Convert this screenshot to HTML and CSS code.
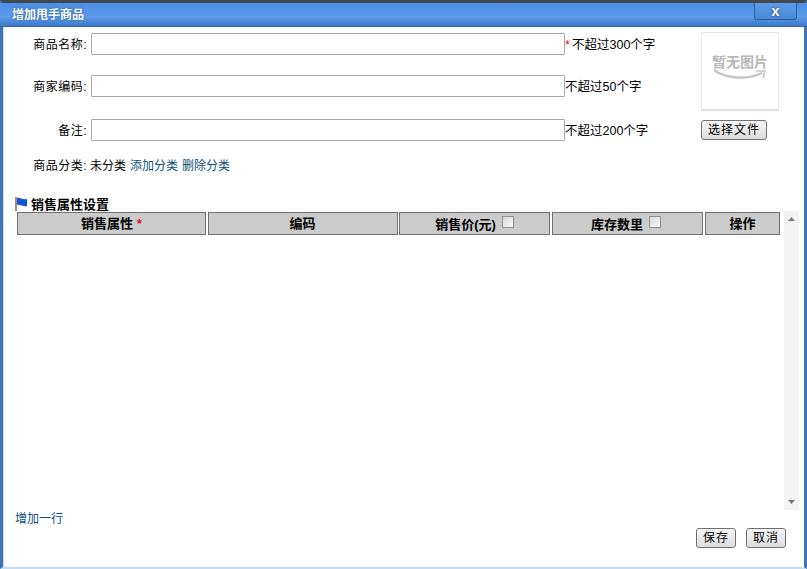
FILE: index.html
```html
<!DOCTYPE html>
<html lang="zh">
<head>
<meta charset="utf-8">
<title>增加甩手商品</title>
<link rel="stylesheet" href="styles.css">
</head>
<body>
<div class="dialog">
  <div class="titlebar">
    <span class="title">增加甩手商品</span>
    <button class="close" type="button">x</button>
  </div>
  <div class="content">
    <div class="top">
      <div class="form">
        <div class="row row1">
          <label class="label">商品名称:</label>
          <input class="input" type="text">
          <span class="hint"><span class="red star">*</span>不超过300个字</span>
        </div>
        <div class="row row2">
          <label class="label">商家编码:</label>
          <input class="input" type="text">
          <span class="hint">不超过50个字</span>
        </div>
        <div class="row row3">
          <label class="label">备注:</label>
          <input class="input" type="text">
          <span class="hint">不超过200个字</span>
        </div>
        <div class="category">
          <span class="label">商品分类:</span>
          <span class="catval">未分类</span>
          <a class="link">添加分类</a>
          <a class="link">删除分类</a>
        </div>
      </div>
      <div class="side">
        <div class="noimg">
          <span class="noimg-text">暂无图片</span>
          <svg class="smile" width="56" height="12" viewBox="0 0 56 12">
            <path d="M2 1 C14 10 36 11 50 4" fill="none" stroke="#c4c4c4" stroke-width="2.4"/>
            <path d="M44 2 L53 2 L51 9" fill="none" stroke="#c4c4c4" stroke-width="1.6"/>
          </svg>
        </div>
        <button class="btn filebtn" type="button">选择文件</button>
      </div>
    </div>
    <div class="section">
      <svg class="flag" width="13" height="14" viewBox="0 0 13 14">
        <rect x="0" y="0" width="2" height="14" fill="#b08a70"/>
        <path d="M2 1 C5 0 7 3 12 2 L12 9 C8 10 5 7 2 8 Z" fill="#0f55d8"/>
      </svg>
      <span>销售属性设置</span>
    </div>
    <div class="grid-wrap">
      <div class="thead">
        <div class="th c1">销售属性 <span class="red">*</span></div>
        <div class="th c2">编码</div>
        <div class="th c3 low">销售价(元) <i class="check"></i></div>
        <div class="th c4 low">库存数里 <i class="check"></i></div>
        <div class="th c5">操作</div>
      </div>
      <div class="scrollbar">
        <svg width="7" height="4" viewBox="0 0 7 4"><path d="M0 4 L3.5 0 L7 4 Z" fill="#777"/></svg>
        <svg width="7" height="4" viewBox="0 0 7 4"><path d="M0 0 L3.5 4 L7 0 Z" fill="#777"/></svg>
      </div>
    </div>
    <div class="addrow"><a class="link">增加一行</a></div>
    <div class="actions">
      <button class="btn" type="button">保存</button>
      <button class="btn" type="button">取消</button>
    </div>
  </div>
</div>
</body>
</html>
```
FILE: styles.css
```css
* { box-sizing: border-box; }
html, body { margin: 0; padding: 0; }
body {
  width: 807px;
  height: 569px;
  overflow: hidden;
  background: #fff;
  font: 12px/16px "Liberation Sans", "Noto Sans CJK SC", sans-serif;
  color: #000;
}
.dialog {
  width: 807px;
  height: 569px;
  display: flex;
  flex-direction: column;
  border-top: 3px solid #41494f;
  border-left: 3px solid #3f74b4;
  border-right: 3px solid #3f74b4;
  border-bottom: 2px solid #c3dcf5;
  box-shadow: inset 1px 0 0 #c3dcf5;
}
.titlebar {
  height: 24px;
  flex: none;
  margin-left: -3px;
  margin-right: -3px;
  padding: 0 10px 0 12px;
  display: flex;
  justify-content: space-between;
  align-items: flex-start;
  background: linear-gradient(#4a90e6, #5c9ae8 60%, #3a78c8);
  border-bottom: 1px solid #2f66ab;
}
.title {
  color: #fff;
  font-weight: bold;
  line-height: 22px;
  padding-top: 1px;
  text-shadow: 0 0 2px #1d4f8f;
}
.close {
  width: 43px;
  height: 17px;
  padding: 0;
  margin: 0;
  background: linear-gradient(#5b9be8, #4a88d8);
  border: 1px solid #2c5f9f;
  border-top: 0;
  border-radius: 0 0 3px 3px;
  color: #fff;
  font: bold 15px/14px "Liberation Sans", sans-serif;
  text-shadow: 0 0 2px #123;
}
.content {
  flex: 1;
  min-height: 0;
  display: flex;
  flex-direction: column;
  padding: 6px 0 0 12px;
}
.top {
  display: flex;
  height: 158px;
  flex: none;
}
.form { width: 686px; flex: none; }
.row {
  display: flex;
  align-items: center;
  height: 22px;
}
.row2 { margin-top: 20px; }
.row3 { margin-top: 22px; }
.label {
  width: 72px;
  flex: none;
  text-align: right;
  padding-top: 2px;
  letter-spacing: 0.5px;
}
.input {
  width: 474px;
  height: 22px;
  margin: 0 0 0 4px;
  padding: 0 2px;
  flex: none;
  background: #fff;
  border: 1px solid #a9a9a9;
  border-radius: 1px;
}
.hint { white-space: nowrap; font-size: 12.5px; padding-top: 2px; }
.red { color: #e0102c; }
.star { display: inline-block; width: 7px; }
.category {
  display: flex;
  margin-top: 16px;
  height: 16px;
}
.catval { margin-left: 3px; padding-top: 1px; }
.category .link { padding-top: 1px; }
.category .label { padding-top: 1px; }
.link { color: #0d4f7c; margin-left: 4px; }
.side {
  display: flex;
  flex-direction: column;
  align-items: flex-start;
}
.noimg {
  width: 78px;
  height: 78px;
  margin-top: -1px;
  background: #fff;
  border: 1px solid #e4e4e4;
  box-shadow: 0 1px 1px #e0e0e0;
  display: flex;
  flex-direction: column;
  align-items: center;
  padding-top: 21px;
}
.noimg-text {
  color: #b9b9b9;
  font-weight: bold;
  font-size: 14px;
  line-height: 16px;
  white-space: nowrap;
}
.smile { margin-top: -1px; }
.btn {
  height: 20px;
  width: 40px;
  padding: 0;
  background: linear-gradient(#f7f7f7, #dcdcdc);
  border: 1px solid #707070;
  border-radius: 3px;
  color: #000;
  font: 12px/16px "Liberation Sans", "Noto Sans CJK SC", sans-serif;
  letter-spacing: 1px;
}
.filebtn {
  width: 66px;
  margin-top: 10px;
}
.section {
  flex: none;
  display: flex;
  align-items: center;
  height: 16px;
  margin-top: 6px;
  font-weight: bold;
  font-size: 13px;
  gap: 3px;
}
.flag { flex: none; margin-bottom: 2px; }
.grid-wrap {
  flex: none;
  display: flex;
  height: 299px;
  margin-top: -2px;
  margin-left: 2px;
}
.thead {
  display: flex;
  gap: 2px;
  width: 763px;
  height: 23px;
  flex: none;
  margin-top: 1px;
}
.th {
  height: 23px;
  background: #cbcbcb;
  border: 1px solid #707070;
  font-weight: bold;
  font-size: 13px;
  text-align: center;
  line-height: 22px;
  white-space: nowrap;
}
.low { padding-top: 2px; line-height: 20px; }
.c1 { width: 189px; }
.c2 { width: 190px; }
.c3 { width: 152px; margin-left: -1px; }
.c4 { width: 151px; padding-right: 4px; }
.c5 { width: 75px; }
.check {
  display: inline-block;
  width: 12px;
  height: 12px;
  background: linear-gradient(135deg, #d8d8d8, #fafafa);
  border: 1px solid #8f8f8f;
  vertical-align: 1px;
  margin-left: 2px;
}
.scrollbar {
  width: 15px;
  margin-left: 4px;
  background: #f3f3f3;
  display: flex;
  flex-direction: column;
  justify-content: space-between;
  align-items: center;
  padding: 6px 0;
}
.addrow {
  flex: none;
  height: 16px;
  margin-top: 1px;
}
.addrow .link { margin-left: 0; }
.actions {
  flex: none;
  display: flex;
  justify-content: flex-end;
  gap: 10px;
  padding-right: 18px;
  margin-top: 1px;
}
```
